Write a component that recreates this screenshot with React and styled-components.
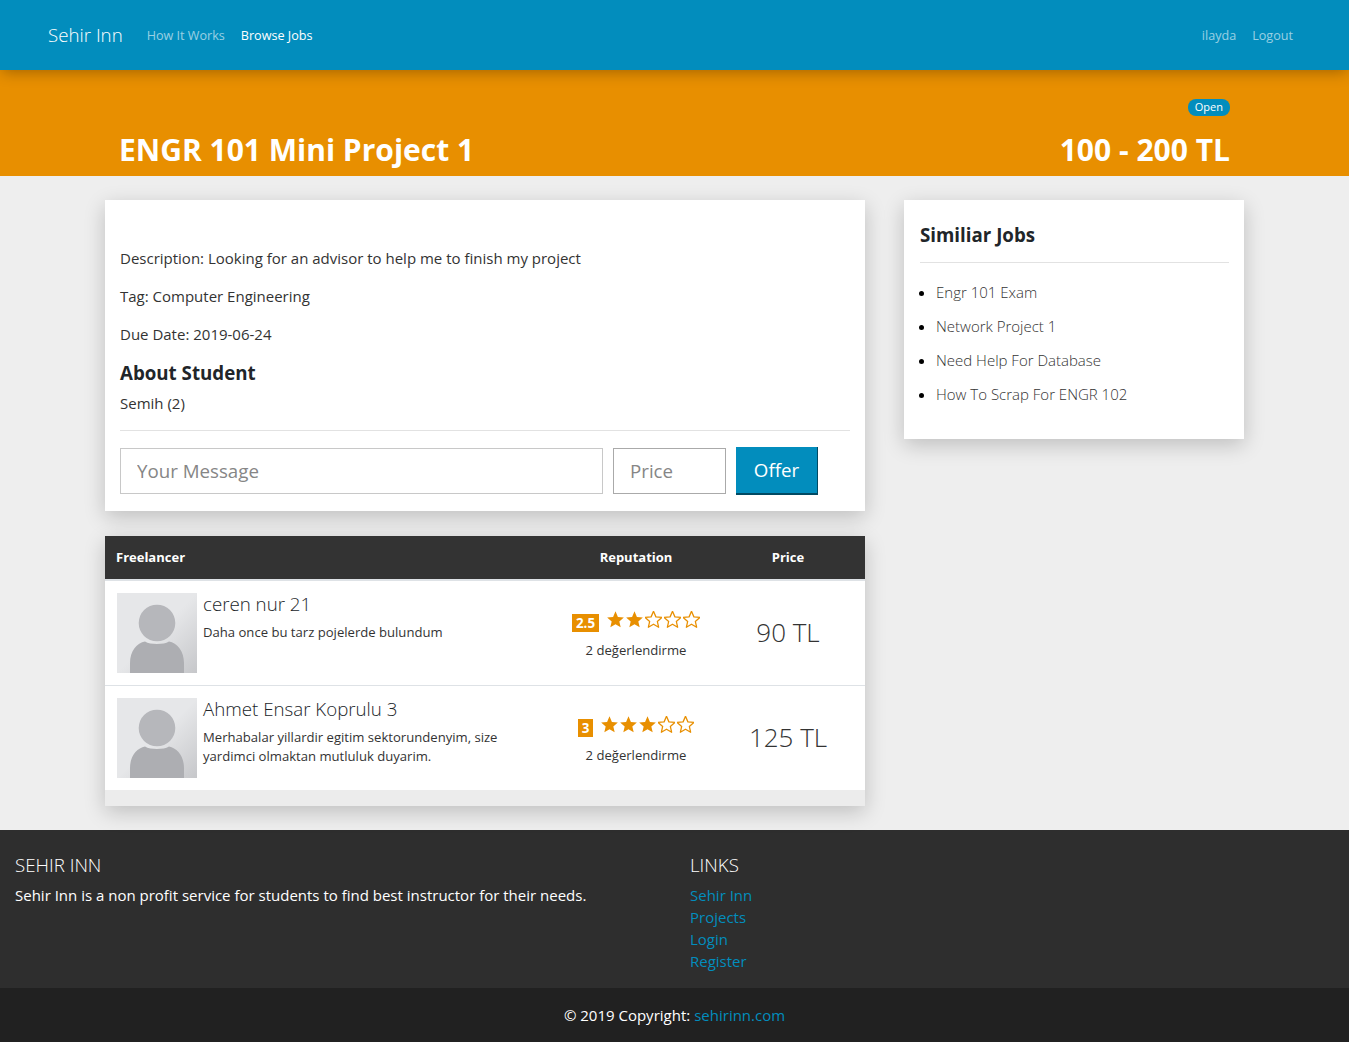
import React from "react";
import styled, { createGlobalStyle } from "styled-components";

const GlobalStyle = createGlobalStyle`
  * { box-sizing: border-box; }
  body {
    margin: 0;
    background: #eeeeee;
    color: #212529;
    font-family: "Open Sans", "Liberation Sans", sans-serif;
    font-size: 15px;
    line-height: 22px;
  }
`;

const Nav = styled.nav`
  position: relative;
  z-index: 2;
  height: 70px;
  display: flex;
  align-items: center;
  padding: 0 56px 0 48px;
  background: #028dbd;
  box-shadow: 0 4px 14px -2px rgba(0, 0, 0, 0.3);
`;

const Brand = styled.a`
  font-size: 18.72px;
  font-weight: 300;
  color: #fff;
  margin-right: 24px;
`;

const NavLink = styled.a`
  padding-top: 1px;
  font-size: 12.6px;
  margin-right: ${(p) => p.$gap ?? 16}px;
  color: ${(p) => (p.$active ? "#fff" : "rgba(255,255,255,0.6)")};
`;

const NavSpacer = styled.div`
  flex: 1;
`;

const Hero = styled.header`
  height: 106px;
  padding: 29px 119px 0;
  background: #e88f00;
  color: #fff;
`;

const BadgeRow = styled.div`
  display: flex;
  justify-content: flex-end;
  height: 17px;
`;

const Badge = styled.span`
  height: 17px;
  padding: 0 7px;
  border-radius: 8px;
  background: #028dbd;
  font-size: 11px;
  line-height: 16px;
  color: #fff;
`;

const HeroTitle = styled.div`
  display: flex;
  justify-content: space-between;
  margin-top: 14px;
  font-size: 30px;
  font-weight: 700;
  line-height: 40px;
`;

const Main = styled.main`
  display: flex;
  align-items: flex-start;
  gap: 39px;
  padding: 24px 105px;
`;

const LeftColumn = styled.div`
  width: 760px;
  display: flex;
  flex-direction: column;
  gap: 25px;
`;

const Card = styled.section`
  background: #fff;
  box-shadow: 0 6px 20px rgba(0, 0, 0, 0.2);
`;

const DetailCard = styled(Card)`
  padding: 47px 15px 16px;
`;

const Para = styled.p`
  margin: 0 0 16px;
  color: #333;
`;

const SectionTitle = styled.h4`
  margin: 0;
  font-size: 18.72px;
  font-weight: 700;
  line-height: 24px;
  color: #212529;
`;

const Owner = styled.p`
  margin: 7px 0 16px;
  color: #333;
`;

const Rule = styled.hr`
  margin: 0;
  border: 0;
  border-top: 1px solid #e2e2e2;
`;

const OfferForm = styled.form`
  display: flex;
  align-items: center;
  gap: 10px;
  margin-top: 16px;
`;

const Field = styled.input`
  width: ${(p) => p.$width}px;
  height: 46px;
  padding: 0 16px 2px;
  border: 1px solid ${(p) => p.$border};
  background: #fff;
  font-family: inherit;
  font-size: 18.72px;
  &::placeholder {
    color: #868686;
  }
`;

const OfferButton = styled.button`
  width: 82px;
  height: 48px;
  padding: 0 0 2px;
  border: 0;
  border-right: 1px solid #014a63;
  border-bottom: 2px solid #014a63;
  background: #028dbd;
  color: #fff;
  font-family: inherit;
  font-size: 18.72px;
`;

const Table = styled.table`
  width: 100%;
  border-collapse: separate;
  border-spacing: 0;
  table-layout: fixed;
`;

const HeadCell = styled.th`
  height: 45px;
  padding: 0 12px 2px;
  background: #333;
  border-bottom: 2px solid #dee2e6;
  color: #fff;
  font-size: 13px;
  font-weight: 700;
  text-align: ${(p) => (p.$left ? "left" : "center")};
  width: ${(p) => p.$width}px;
  &:first-child {
    padding-left: 11px;
  }
`;

const Cell = styled.td`
  padding: 12px;
  vertical-align: middle;
  text-align: center;
  tr:not(:last-child) > & {
    border-bottom: 1px solid #dee2e6;
  }
`;

const PersonCell = styled(Cell)`
  text-align: left;
`;

const Person = styled.div`
  display: flex;
  gap: 6px;
`;

const Avatar = styled.svg`
  flex: none;
  display: block;
  width: 80px;
  height: 80px;
`;

const PersonName = styled.div`
  font-size: 18.72px;
  font-weight: 300;
  line-height: 22px;
  color: #212529;
`;

const PersonNote = styled.div`
  margin-top: 8px;
  font-size: 13.1px;
  line-height: 19px;
  color: #333;
`;

const Score = styled.div`
  display: flex;
  align-items: flex-start;
  justify-content: center;
  gap: 8px;
  margin-top: 6px;
`;

const ScoreBox = styled.span`
  height: 18px;
  margin-top: 3px;
  padding: 0 4px;
  background: #e88f00;
  color: #fff;
  font-size: 13.4px;
  font-weight: 700;
  line-height: 18px;
`;

const Stars = styled.span`
  display: inline-flex;
  gap: 2px;
`;

const StarIcon = styled.svg`
  display: block;
  width: 17px;
  height: 17px;
`;

const Votes = styled.div`
  margin-top: 7px;
  font-size: 13.1px;
  color: #333;
`;

const Price = styled.div`
  padding-bottom: 3px;
  font-size: 26px;
  font-weight: 300;
  color: #333;
`;

const TableFoot = styled.div`
  height: 16px;
  background: #ececec;
`;

const SideCard = styled(Card)`
  width: 340px;
  padding: 21px 15px 28px 16px;
`;

const SideTitle = styled(SectionTitle)`
  padding-bottom: 14px;
  border-bottom: 1px solid #e2e2e2;
  margin-bottom: 12px;
  line-height: 27px;
`;

const JobList = styled.ul`
  margin: 0;
  padding: 0 0 0 16px;
`;

const JobItem = styled.li`
  height: 34px;
  line-height: 34px;
  font-weight: 300;
  color: #333;
  &::marker {
    color: #000;
  }
`;

const Footer = styled.footer`
  height: 158px;
  display: flex;
  padding: 23px 15px 0;
  background: #2e2e2e;
  color: #fff;
`;

const FooterCol = styled.div`
  width: ${(p) => p.$width}px;
`;

const FooterTitle = styled.h5`
  margin: 0 0 7px;
  font-size: 18.72px;
  font-weight: 300;
  line-height: 24px;
`;

const FooterText = styled.p`
  margin: 0;
`;

const FooterLink = styled.a`
  display: block;
  color: #028dbd;
`;

const Copyright = styled.div`
  height: 54px;
  display: flex;
  align-items: center;
  justify-content: center;
  gap: 4px;
  background: #212121;
  color: #fff;
`;

const CopyrightLink = styled.a`
  color: #028dbd;
`;

const Placeholder = ({ id }) => (
  <Avatar viewBox="0 0 80 80">
    <defs>
      <linearGradient id={id} x1="0" y1="0" x2="1" y2="1">
        <stop offset="0.5" stopColor="#e6e7e9" />
        <stop offset="1" stopColor="#c6c7ca" />
      </linearGradient>
    </defs>
    <rect width="80" height="80" fill={`url(#${id})`} />
    <circle cx="40" cy="30" r="18.3" fill="#b6b7bb" />
    <path
      d="M13 80V70c0-12 7-20 15-21.500 3 1.800 7 2.500 12 2.500s9-.7 12-2.500c8 1.500 15 9.500 15 21.500v10z"
      fill="#adaeb2"
    />
  </Avatar>
);

const STAR_POINTS = "12,0.500 15.400,8.300 23.800,9.100 17.400,14.700 19.300,23 12,18.700 4.700,23 6.600,14.700 0.200,9.100 8.600,8.300";

const Star = ({ filled }) => (
  <StarIcon viewBox="0 0 24 24">
    <polygon
      points={STAR_POINTS}
      fill={filled ? "#e88f00" : "none"}
      stroke="#e88f00"
      strokeWidth={filled ? 0 : 1.8}
      strokeLinejoin="round"
    />
  </StarIcon>
);

const Rating = ({ value, filled }) => (
  <Score>
    <ScoreBox>{value}</ScoreBox>
    <Stars>
      {[0, 1, 2, 3, 4].map((i) => (
        <Star key={i} filled={i < filled} />
      ))}
    </Stars>
  </Score>
);

const offers = [
  { id: "a1", name: "ceren nur 21", note: "Daha once bu tarz pojelerde bulundum", score: "2.5", filled: 2, price: "90 TL" },
  {
    id: "a2",
    name: "Ahmet Ensar Koprulu 3",
    note: "Merhabalar yillardir egitim sektorundenyim, size yardimci olmaktan mutluluk duyarim.",
    score: "3",
    filled: 3,
    price: "125 TL",
  },
];

const jobs = ["Engr 101 Exam", "Network Project 1", "Need Help For Database", "How To Scrap For ENGR 102"];

export default function App() {
  return (
    <>
      <GlobalStyle />
      <Nav>
        <Brand>Sehir Inn</Brand>
        <NavLink>How It Works</NavLink>
        <NavLink $active>Browse Jobs</NavLink>
        <NavSpacer />
        <NavLink>ilayda</NavLink>
        <NavLink $gap={0}>Logout</NavLink>
      </Nav>
      <Hero>
        <BadgeRow>
          <Badge>Open</Badge>
        </BadgeRow>
        <HeroTitle>
          <span>ENGR 101 Mini Project 1</span>
          <span>100 - 200 TL</span>
        </HeroTitle>
      </Hero>
      <Main>
        <LeftColumn>
          <DetailCard>
            <Para>Description: Looking for an advisor to help me to finish my project</Para>
            <Para>Tag: Computer Engineering</Para>
            <Para>Due Date: 2019-06-24</Para>
            <SectionTitle>About Student</SectionTitle>
            <Owner>Semih (2)</Owner>
            <Rule />
            <OfferForm>
              <Field $width={483} $border="#c8c8c8" placeholder="Your Message" />
              <Field $width={113} $border="#aaaaaa" placeholder="Price" />
              <OfferButton type="button">Offer</OfferButton>
            </OfferForm>
          </DetailCard>
          <Card>
            <Table>
              <thead>
                <tr>
                  <HeadCell $left>Freelancer</HeadCell>
                  <HeadCell $width={150}>Reputation</HeadCell>
                  <HeadCell $width={154}>Price</HeadCell>
                </tr>
              </thead>
              <tbody>
                {offers.map((o) => (
                  <tr key={o.id}>
                    <PersonCell>
                      <Person>
                        <Placeholder id={o.id} />
                        <div>
                          <PersonName>{o.name}</PersonName>
                          <PersonNote>{o.note}</PersonNote>
                        </div>
                      </Person>
                    </PersonCell>
                    <Cell>
                      <Rating value={o.score} filled={o.filled} />
                      <Votes>2 değerlendirme</Votes>
                    </Cell>
                    <Cell>
                      <Price>{o.price}</Price>
                    </Cell>
                  </tr>
                ))}
              </tbody>
            </Table>
            <TableFoot />
          </Card>
        </LeftColumn>
        <SideCard>
          <SideTitle>Similiar Jobs</SideTitle>
          <JobList>
            {jobs.map((j) => (
              <JobItem key={j}>{j}</JobItem>
            ))}
          </JobList>
        </SideCard>
      </Main>
      <Footer>
        <FooterCol $width={675}>
          <FooterTitle>SEHIR INN</FooterTitle>
          <FooterText>Sehir Inn is a non profit service for students to find best instructor for their needs.</FooterText>
        </FooterCol>
        <FooterCol $width={300}>
          <FooterTitle>LINKS</FooterTitle>
          <FooterLink>Sehir Inn</FooterLink>
          <FooterLink>Projects</FooterLink>
          <FooterLink>Login</FooterLink>
          <FooterLink>Register</FooterLink>
        </FooterCol>
      </Footer>
      <Copyright>
        <span>© 2019 Copyright:</span>
        <CopyrightLink>sehirinn.com</CopyrightLink>
      </Copyright>
    </>
  );
}
